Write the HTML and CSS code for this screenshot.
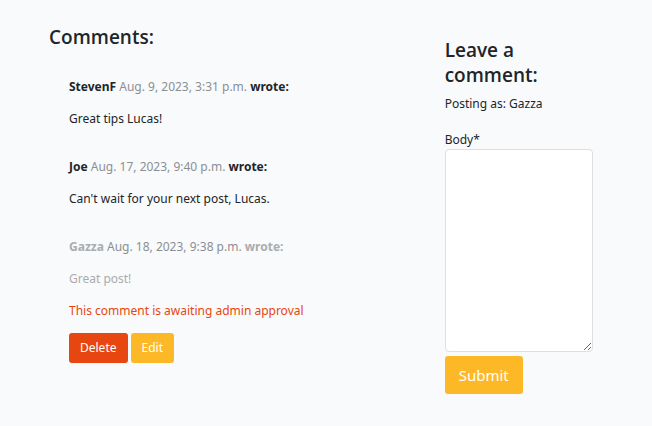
FILE: index.html
```html
<!DOCTYPE html>
<html lang="en">
<head>
<meta charset="utf-8">
<meta name="viewport" content="width=device-width, initial-scale=1">
<title>Comments</title>
<link rel="stylesheet" href="styles.css">
</head>
<body>
<main class="layout">
  <section class="comments">
    <h3 class="heading">Comments:</h3>
    <article class="comment">
      <p class="meta"><strong>StevenF</strong> <span class="date">Aug. 9, 2023, 3:31 p.m.</span> <strong>wrote:</strong></p>
      <p class="text">Great tips Lucas!</p>
    </article>
    <article class="comment">
      <p class="meta"><strong>Joe</strong> <span class="date">Aug. 17, 2023, 9:40 p.m.</span> <strong>wrote:</strong></p>
      <p class="text">Can't wait for your next post, Lucas.</p>
    </article>
    <article class="comment pending">
      <p class="meta"><strong>Gazza</strong> <span class="date">Aug. 18, 2023, 9:38 p.m.</span> <strong>wrote:</strong></p>
      <p class="text">Great post!</p>
      <p class="notice">This comment is awaiting admin approval</p>
      <div class="actions">
        <button class="btn btn-delete" type="button">Delete</button>
        <button class="btn btn-edit" type="button">Edit</button>
      </div>
    </article>
  </section>
  <section class="reply">
    <h3 class="heading">Leave a comment:</h3>
    <p class="posting">Posting as: Gazza</p>
    <form class="form">
      <label class="label" for="body">Body*</label>
      <textarea class="body" id="body" name="body" rows="10" required></textarea>
      <button class="btn btn-submit" type="submit">Submit</button>
    </form>
  </section>
</main>
</body>
</html>
```
FILE: styles.css
```css
* {
  box-sizing: border-box;
}

body {
  margin: 0;
  background: #f9fafc;
  color: #212529;
  font-family: "Segoe UI", "Noto Sans", "Open Sans", sans-serif;
  font-size: 12px;
  line-height: 16px;
}

p,
h3 {
  margin: 0;
}

.layout {
  display: grid;
  grid-template-columns: 2fr 1fr;
  padding: 25px 12px;
}

.comments {
  padding: 0 37px;
}

.heading {
  font-family: "Segoe UI", "Open Sans", sans-serif;
  font-size: 19px;
  font-weight: 600;
  line-height: 25px;
}

.comment {
  padding: 0 20px;
  margin-top: 32px;
}

.comments .heading + .comment {
  margin-top: 29px;
}

.text,
.notice {
  margin-top: 16px;
}

.date {
  color: #8c8f92;
}

.pending .meta strong,
.pending .text {
  color: #aaacae;
}

.notice {
  color: #e84610;
}

.actions {
  display: flex;
  gap: 3px;
  margin-top: 14px;
}

.btn {
  border: 0;
  border-radius: 3px;
  color: #fff;
  font-family: inherit;
  font-size: 12px;
  line-height: 18px;
  padding: 6px 11px;
}

.btn-delete {
  background: #e84610;
}

.btn-edit {
  background: #fdb827;
}

.reply {
  padding: 13px 47px 0 14px;
}

.posting {
  margin-top: 8px;
}

.form {
  display: flex;
  flex-direction: column;
  align-items: flex-start;
  margin-top: 20px;
}

.body {
  width: 100%;
  height: 203px;
  margin: 1px 0 4px;
  padding: 6px 12px;
  border: 1px solid #dcdfe3;
  border-radius: 4px;
  background: #fff;
  font: inherit;
  resize: vertical;
}

.btn-submit {
  background: #fdb827;
  font-size: 15px;
  line-height: 24px;
  padding: 7px 14px;
}
```
